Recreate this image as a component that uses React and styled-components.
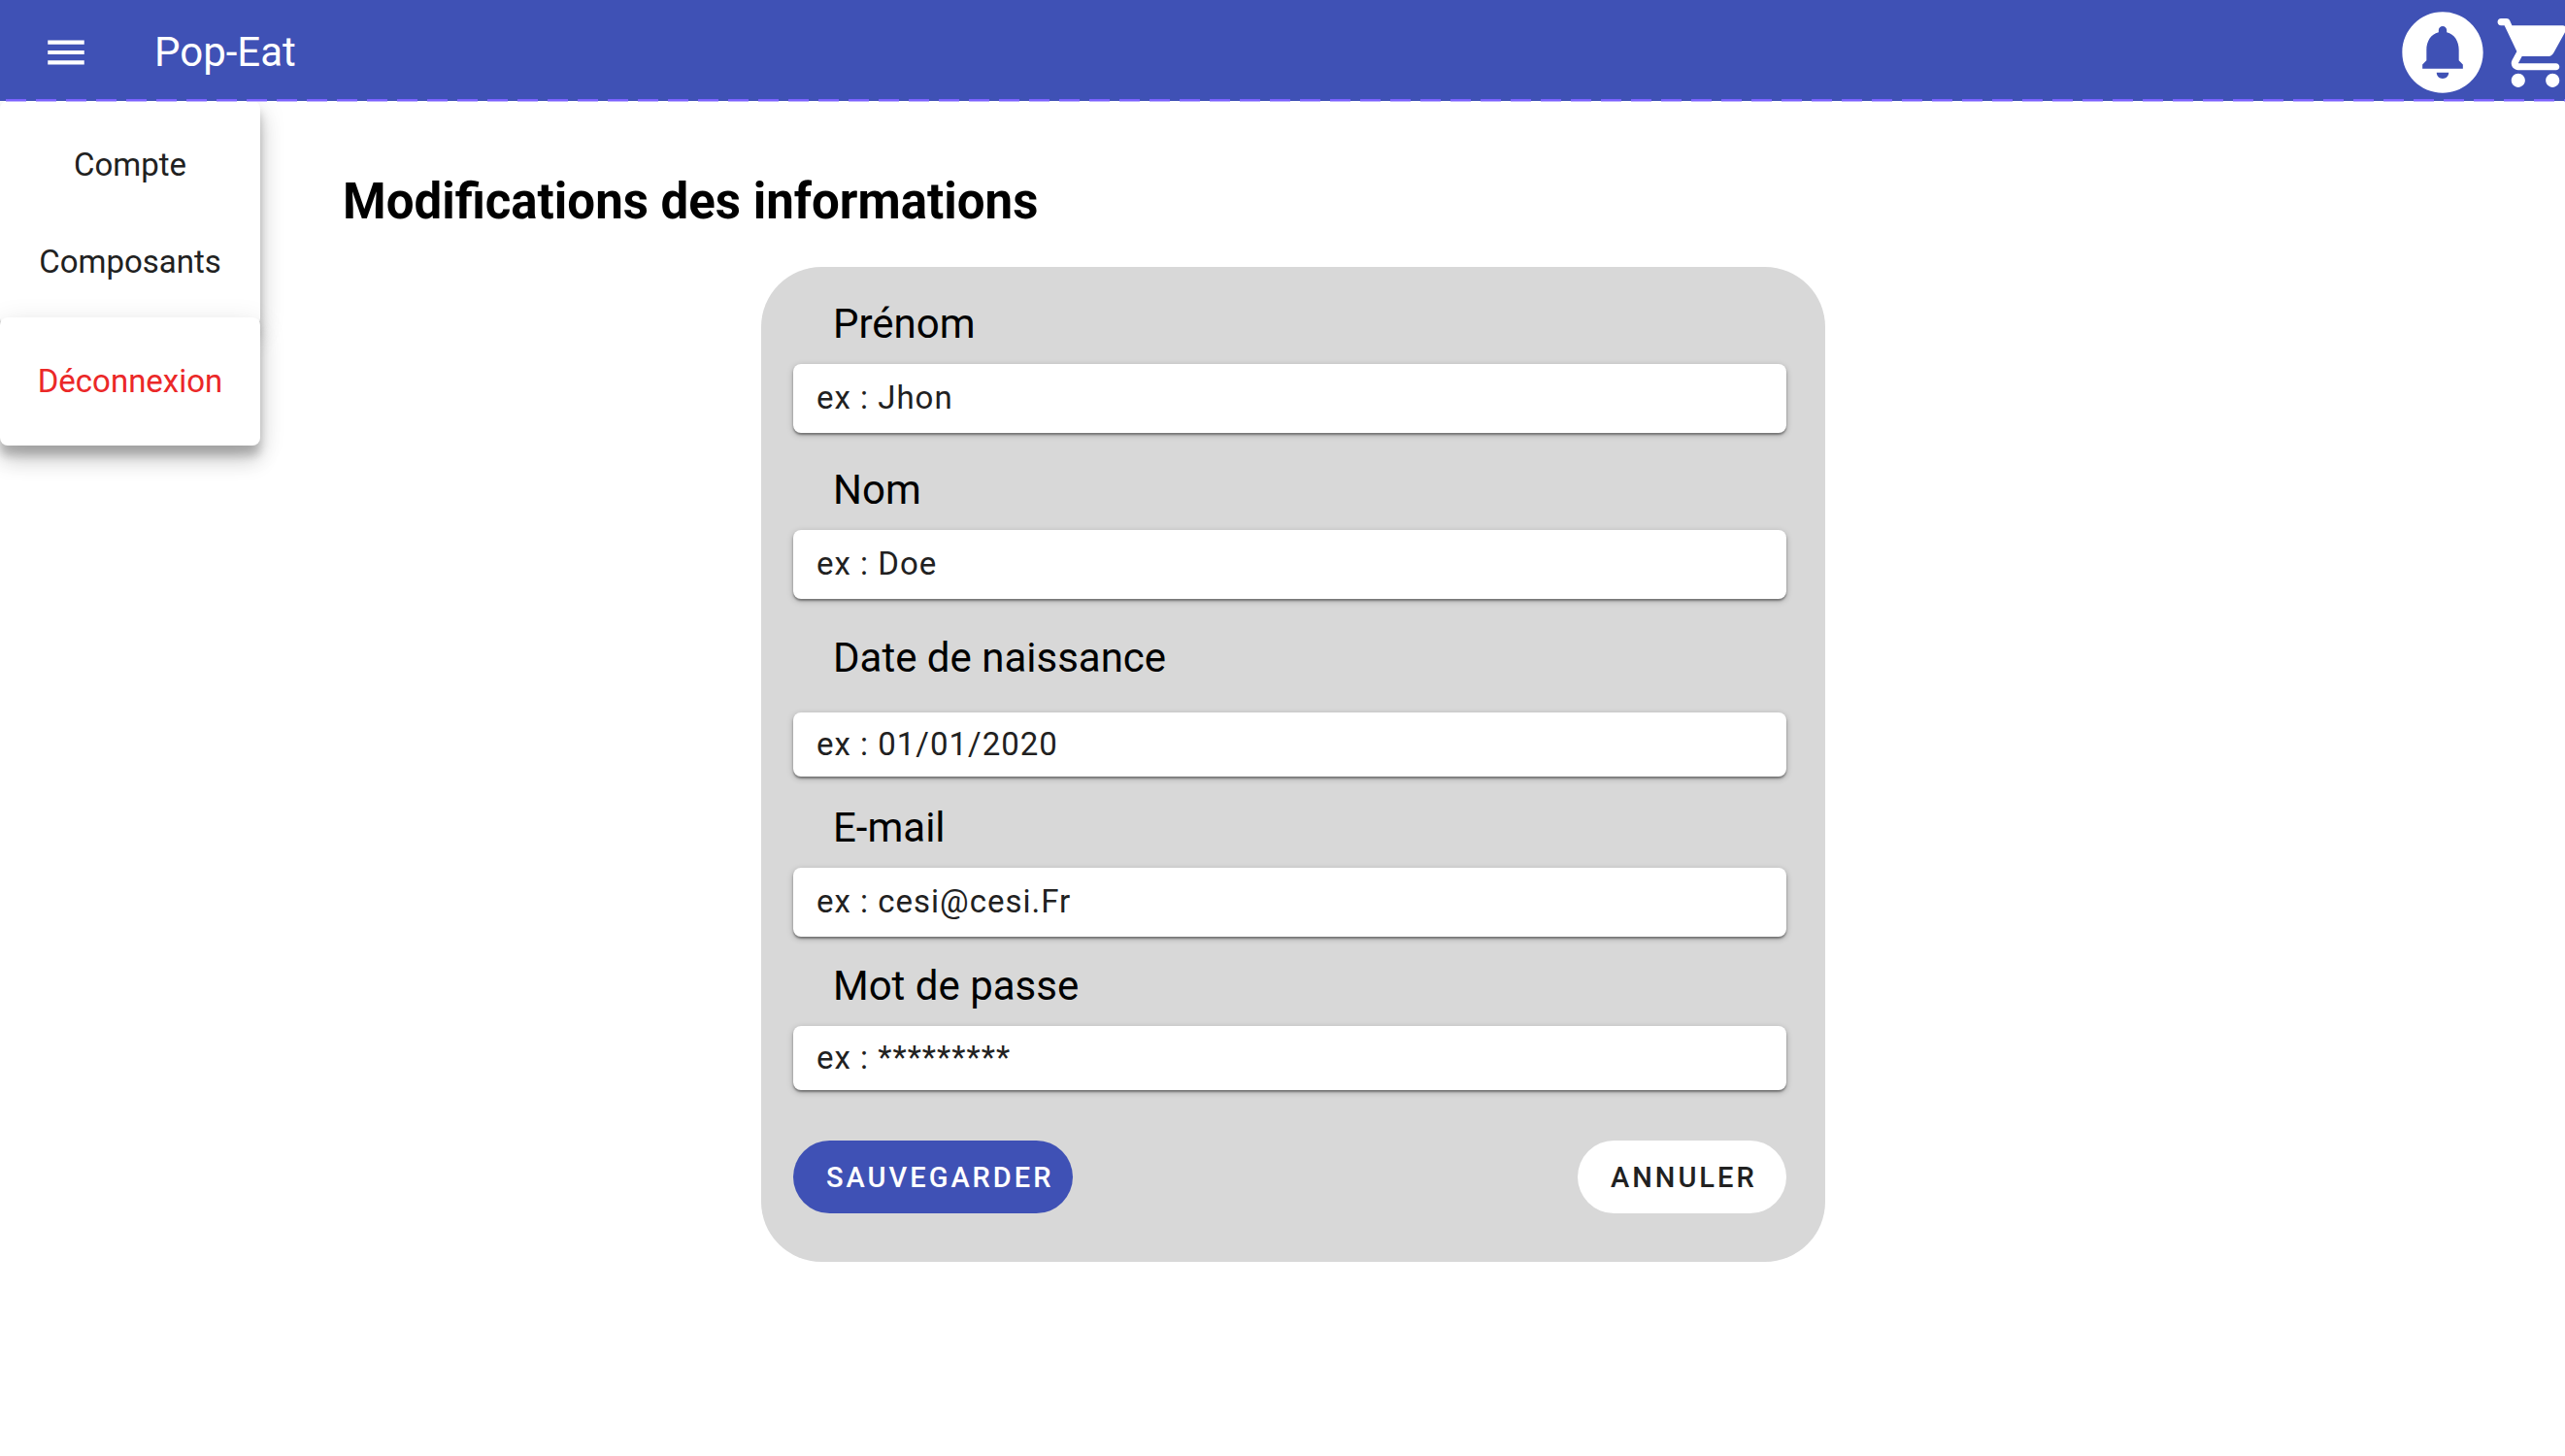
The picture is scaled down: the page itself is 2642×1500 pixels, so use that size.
import React from "react";
import styled, { createGlobalStyle } from "styled-components";

const GlobalStyle = createGlobalStyle`
  *, *::before, *::after { box-sizing: border-box; }
  body {
    margin: 0;
    background: #ffffff;
    color: #212121;
    font-family: Roboto, "Liberation Sans", sans-serif;
  }
`;

const Header = styled.header`
  position: relative;
  z-index: 2;
  display: flex;
  align-items: center;
  height: 104px;
  padding: 4px 0 0 43px;
  background: #3f51b5;
  color: #ffffff;

  &::after {
    content: "";
    position: absolute;
    left: 6px;
    right: 0;
    bottom: -1px;
    height: 3px;
    background:
      linear-gradient(90deg, #7b61ff 21px, transparent 21px) 0 0 / 31px 2px round no-repeat,
      linear-gradient(90deg, #bdb0ff 21px, transparent 21px) 0 2px / 31px 1px round no-repeat;
  }
`;

const IconButton = styled.button`
  display: flex;
  flex: none;
  padding: 0;
  border: 0;
  background: none;
  color: inherit;
  cursor: pointer;
`;

const Icon = styled.svg`
  display: block;
  flex: none;
  width: ${({ $size }) => $size}px;
  height: ${({ $size }) => $size}px;
  fill: currentColor;
`;

const Brand = styled.a`
  margin-left: 66px;
  color: inherit;
  font-size: 42px;
  line-height: 52px;
  text-decoration: none;
`;

const Actions = styled.div`
  display: flex;
  align-items: center;
  gap: 3px;
  width: 176px;
  margin-left: auto;
  overflow: hidden;
`;

const Layout = styled.div`
  display: flex;
  align-items: flex-start;
`;

const Menu = styled.nav`
  flex: none;
  width: 268px;
`;

const MenuCard = styled.ul`
  position: relative;
  margin: 0;
  padding: 16px 0;
  list-style: none;
  background: #ffffff;
  border-radius: 8px;
  box-shadow:
    0 10px 10px rgba(0, 0, 0, 0.2),
    0 6px 29px rgba(0, 0, 0, 0.12),
    0 17px 21px rgba(0, 0, 0, 0.14);

  & + & { margin-top: -9px; }
`;

const MenuLink = styled.a`
  display: flex;
  align-items: center;
  justify-content: center;
  height: 100px;
  color: ${({ $danger }) => ($danger ? "#eb2828" : "#212121")};
  font-size: 33px;
  line-height: 40px;
  text-decoration: none;
`;

const Main = styled.main`
  flex: 1;
  min-width: 0;
  padding: 74px 331px 48px 85px;

  @media (max-width: 1700px) {
    padding-right: 85px;
  }
`;

const Title = styled.h1`
  margin: 0 0 37px;
  color: #000000;
  font-size: 51px;
  font-weight: 700;
  line-height: 60px;
`;

const Card = styled.form`
  max-width: 1096px;
  margin: 0 auto;
  padding: 34px 40px 50px 33px;
  background: #d8d8d8;
  border-radius: 62px;
`;

const Field = styled.div`
  display: flex;
  flex-direction: column;
  gap: ${({ $gap }) => $gap || 16}px;
  margin-bottom: ${({ $after }) => $after}px;
`;

const Label = styled.label`
  padding-left: 41px;
  color: #000000;
  font-size: 42px;
  line-height: 50px;
`;

const Input = styled.input`
  width: 100%;
  height: ${({ $compact }) => ($compact ? 66 : 71)}px;
  padding: 0 24px 2px;
  border: 0;
  border-radius: 8px;
  background: #ffffff;
  box-shadow:
    0 2px 2px rgba(0, 0, 0, 0.34),
    0 2px 6px rgba(0, 0, 0, 0.26);
  color: #212121;
  font-family: inherit;
  font-size: 33px;
  letter-spacing: 1px;

  &::placeholder { color: #212121; opacity: 1; }
`;

const Buttons = styled.div`
  display: flex;
  flex-wrap: wrap;
  justify-content: space-between;
  gap: 16px;
`;

const Button = styled.button`
  min-width: 215px;
  height: 75px;
  padding: 0 20px 0 34px;
  border: 0;
  border-radius: 38px;
  background: ${({ $primary }) => ($primary ? "#3f51b5" : "#ffffff")};
  color: ${({ $primary }) => ($primary ? "#ffffff" : "#212121")};
  font-family: inherit;
  font-size: 29px;
  font-weight: 500;
  letter-spacing: 3px;
  text-align: left;
  text-transform: uppercase;
  cursor: pointer;
`;

const FIELDS = [
  { id: "prenom", label: "Prénom", hint: "ex : Jhon", type: "text", after: 34 },
  { id: "nom", label: "Nom", hint: "ex : Doe", type: "text", after: 36 },
  { id: "naissance", label: "Date de naissance", hint: "ex : 01/01/2020", type: "text", after: 28, gap: 31, compact: true },
  { id: "email", label: "E-mail", hint: "ex : cesi@cesi.Fr", type: "email", after: 26 },
  { id: "passe", label: "Mot de passe", hint: "ex : *********", type: "password", after: 52, compact: true },
];

export default function App() {
  return (
    <>
      <GlobalStyle />
      <Header>
        <IconButton type="button" aria-label="Menu">
          <Icon $size={50} viewBox="0 0 24 24" aria-hidden="true">
            <path d="M3 18h18v-2H3v2zm0-5h18v-2H3v2zm0-7v2h18V6H3z" />
          </Icon>
        </IconButton>
        <Brand href="#">Pop-Eat</Brand>
        <Actions>
          <IconButton type="button" aria-label="Notifications">
            <Icon $size={100} viewBox="0 0 24 24" aria-hidden="true">
              <path d="M12 2C6.48 2 2 6.48 2 12s4.48 10 10 10 10-4.48 10-10S17.52 2 12 2zm0 16.5c-.83 0-1.5-.67-1.5-1.5h3c0 .83-.67 1.5-1.5 1.5zm5-2.5H7v-1l1-1v-2.61C8 9.27 9.03 7.47 11 7v-.5c0-.57.43-1 1-1s1 .43 1 1V7c1.97.47 3 2.28 3 4.39V14l1 1v1z" />
            </Icon>
          </IconButton>
          <IconButton type="button" aria-label="Panier">
            <Icon $size={85} viewBox="0 0 24 24" aria-hidden="true">
              <path d="M7 18c-1.1 0-1.99.9-1.99 2S5.9 22 7 22s2-.9 2-2-.9-2-2-2zM1 3c0 .55.45 1 1 1h1l3.6 7.59-1.35 2.44C4.52 15.37 5.48 17 7 17h11c.55 0 1-.45 1-1s-.45-1-1-1H7l1.1-2h7.45c.75 0 1.41-.41 1.75-1.03l3.58-6.49c.37-.66-.11-1.48-.87-1.48H5.21l-.67-1.43c-.16-.35-.52-.57-.9-.57H2c-.55 0-1 .45-1 1zm16 15c-1.1 0-1.99.9-1.99 2s.89 2 1.99 2 2-.9 2-2-.9-2-2-2z" />
            </Icon>
          </IconButton>
        </Actions>
      </Header>
      <Layout>
        <Menu>
          <MenuCard>
            <li><MenuLink href="#">Compte</MenuLink></li>
            <li><MenuLink href="#">Composants</MenuLink></li>
          </MenuCard>
          <MenuCard>
            <li><MenuLink href="#" $danger>Déconnexion</MenuLink></li>
          </MenuCard>
        </Menu>
        <Main>
          <Title>Modifications des informations</Title>
          <Card>
            {FIELDS.map((f) => (
              <Field key={f.id} $gap={f.gap} $after={f.after}>
                <Label htmlFor={f.id}>{f.label}</Label>
                <Input id={f.id} type={f.type} placeholder={f.hint} $compact={f.compact} />
              </Field>
            ))}
            <Buttons>
              <Button type="submit" $primary>Sauvegarder</Button>
              <Button type="button">Annuler</Button>
            </Buttons>
          </Card>
        </Main>
      </Layout>
    </>
  );
}
